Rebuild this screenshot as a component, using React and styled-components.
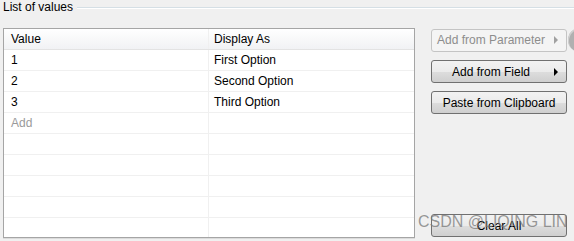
import React from 'react';
import styled, { createGlobalStyle } from 'styled-components';

const Global = createGlobalStyle`
    html, body {
        margin: 0;
        padding: 0;
        background: #f0f0f0;
        overflow: hidden;
    }
    body {
        font-family: "Liberation Sans", Arial, sans-serif;
        font-size: 12px;
        color: #000;
    }
`

const Page = styled.div`
    position: relative;
    width: 574px;
    height: 241px;
    padding: 0 0 0 3px;
    box-sizing: border-box;
`

const Legend = styled.div`
    display: flex;
    align-items: center;
    height: 15px;
    margin-bottom: 13px;
`

const LegendText = styled.span`
    line-height: 15px;
    padding-right: 4px;
    white-space: nowrap;
`

const LegendLine = styled.div`
    flex: 1;
    height: 1px;
    margin-top: 1px;
    background: #d5dfe5;
    border-bottom: 1px solid #ffffff;
`

const Content = styled.div`
    display: flex;
    gap: 16px;
`

const TableBox = styled.div`
    width: 412px;
    height: 210px;
    box-sizing: border-box;
    border: 1px solid #a5a5a5;
    box-shadow: 0 1px 0 #dcdcdc;
    background: #fff;
    overflow: hidden;
`

const Row = styled.div`
    display: grid;
    grid-template-columns: 205px 1fr;
    height: 20px;
    border-bottom: 1px solid ${p => (p.$head ? '#e3e3e3' : '#f0f0f0')};
    background: ${p => (p.$head ? 'linear-gradient(#ffffff, #f1f2f4)' : '#fff')};
`

const Cell = styled.div`
    display: flex;
    align-items: center;
    padding-left: ${p => (p.$second ? '5px' : '7px')};
    border-right: ${p => (p.$second ? 'none' : '1px solid #f0f0f0')};
    color: ${p => (p.$muted ? '#9a9a9a' : '#000')};
    white-space: nowrap;
`

const Buttons = styled.div`
    display: flex;
    flex-direction: column;
    gap: 8px;
    width: 136px;
    height: 210px;
`

const ButtonRow = styled.div`
    display: flex;
    align-items: center;
`

const Button = styled.div`
    flex: none;
    position: relative;
    display: flex;
    align-items: center;
    justify-content: center;
    width: 136px;
    height: 23px;
    box-sizing: border-box;
    padding-right: ${p => (p.$arrow ? '16px' : '0')};
    border: 1px solid ${p => (p.$disabled ? '#c4c4c4' : '#707070')};
    border-radius: 3px;
    background: ${p => (p.$disabled
        ? '#f4f4f4'
        : 'linear-gradient(#f2f2f2 0%, #ebebeb 50%, #dddddd 51%, #cfcfcf 100%)')};
    color: ${p => (p.$disabled ? '#8d8d8d' : '#000')};
    white-space: nowrap;
    margin-top: ${p => (p.$bottom ? 'auto' : '0')};
    margin-bottom: ${p => (p.$bottom ? '1px' : '0')};
`

const Arrow = styled.span`
    position: absolute;
    right: 8px;
    top: 50%;
    margin-top: -4px;
    width: 0;
    height: 0;
    border-top: 4px solid transparent;
    border-bottom: 4px solid transparent;
    border-left: 4px solid ${p => (p.$disabled ? '#a0a0a0' : '#000')};
`

const Knob = styled.div`
    flex: none;
    width: 24px;
    height: 24px;
    margin-left: 1px;
    border-radius: 50%;
    background: #b0b0b0;
    box-shadow: inset 1px 1px 0 #d0d0d0;
`

const Watermark = styled.div`
    position: absolute;
    left: 418px;
    top: 213px;
    font-family: "Liberation Sans", Arial, sans-serif;
    font-size: 16px;
    color: rgba(120, 120, 120, 0.75);
    white-space: nowrap;
    pointer-events: none;
`

const rows = [
    { value: '1', label: 'First Option' },
    { value: '2', label: 'Second Option' },
    { value: '3', label: 'Third Option' },
]

function App() {
    return (
        <Page>
            <Global />
            <Legend>
                <LegendText>List of values</LegendText>
                <LegendLine />
            </Legend>
            <Content>
                <TableBox>
                    <Row $head>
                        <Cell>Value</Cell>
                        <Cell $second>Display As</Cell>
                    </Row>
                    {rows.map(r => (
                        <Row key={r.value}>
                            <Cell>{r.value}</Cell>
                            <Cell $second>{r.label}</Cell>
                        </Row>
                    ))}
                    <Row>
                        <Cell $muted>Add</Cell>
                        <Cell $second />
                    </Row>
                    {[0, 1, 2, 3, 4, 5].map(i => (
                        <Row key={'e' + i}>
                            <Cell />
                            <Cell $second />
                        </Row>
                    ))}
                </TableBox>
                <Buttons>
                    <ButtonRow>
                        <Button $disabled $arrow>
                            Add from Parameter
                            <Arrow $disabled />
                        </Button>
                        <Knob />
                    </ButtonRow>
                    <Button $arrow>
                        Add from Field
                        <Arrow />
                    </Button>
                    <Button>Paste from Clipboard</Button>
                    <Button $bottom>Clear All</Button>
                </Buttons>
            </Content>
            <Watermark>CSDN @LIQING LIN</Watermark>
        </Page>
    )
}

export default App;
